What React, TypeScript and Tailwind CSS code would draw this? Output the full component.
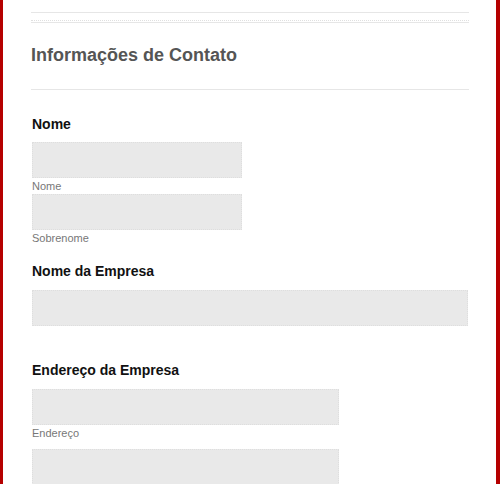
export default function App() {
  const font = { fontFamily: '"Liberation Sans", Arial, sans-serif' };
  const input = "h-[36px] bg-[#e9e9e9] border border-dotted border-[#dedede]";
  return (
    <div className="w-[500px] h-[484px] overflow-hidden bg-white border-l-[3px] border-r-[4px] border-[#b50000]" style={font}>
      <div className="pl-[28px] pr-[27px]">
        <div className="h-[13px] border-b border-[#e6e6e6]"></div>
        <div className="h-[8px] border-b border-dotted border-[#e0e0e0]"></div>
        <div className="mt-[1px] border-t border-[#e6e6e6]"></div>
        <h1 className="mt-[21px] text-[18px] leading-[22px] font-bold text-[#555555]">Informações de Contato</h1>
        <div className="mt-[23px] border-t border-[#e6e6e6]"></div>

        <div className="pl-[1px]">
          <div className="mt-[25px] text-[14px] leading-[18px] font-bold text-[#111111]">Nome</div>
          <div className={`mt-[9px] w-[210px] ${input}`}></div>
          <div className="text-[11px] leading-[16px] text-[#777777]">Nome</div>
          <div className={`w-[210px] ${input}`}></div>
          <div className="text-[11px] leading-[16px] text-[#777777]">Sobrenome</div>

          <div className="mt-[16px] text-[14px] leading-[18px] font-bold text-[#111111]">Nome da Empresa</div>
          <div className={`mt-[10px] w-[436px] ${input}`}></div>

          <div className="mt-[35px] text-[14px] leading-[18px] font-bold text-[#111111]">Endereço da Empresa</div>
          <div className={`mt-[10px] w-[307px] ${input}`}></div>
          <div className="text-[11px] leading-[16px] text-[#777777]">Endereço</div>
          <div className={`mt-[8px] w-[307px] ${input}`}></div>
        </div>
      </div>
    </div>
  );
}
